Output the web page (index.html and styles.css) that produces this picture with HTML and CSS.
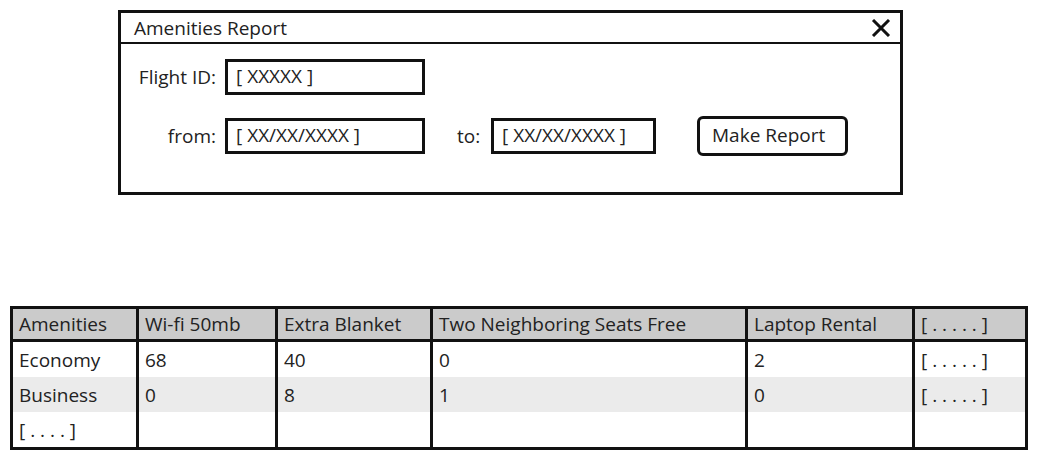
FILE: index.html
```html
<!DOCTYPE html>
<html lang="en">

<head>
    <meta charset="UTF-8">
    <meta name="viewport" content="width=device-width, initial-scale=1.0">
    <title>Amenities Report</title>
    <link rel="stylesheet" href="styles.css">
</head>

<body>
    <!-- 对话框 -->
    <div class="dialog">
        <div class="dialog-title">
            <span>Amenities Report</span>
            <svg class="close" width="20" height="18" viewBox="0 0 20 18">
                <path d="M2 1 L18 17 M18 1 L2 17" stroke="#111" stroke-width="3" fill="none" />
            </svg>
        </div>
        <div class="dialog-body">
            <div class="form-row">
                <label class="lbl">Flight ID:</label>
                <div class="field wide">[ XXXXX ]</div>
            </div>
            <div class="form-row second">
                <label class="lbl">from:</label>
                <div class="field wide">[ XX/XX/XXXX ]</div>
                <label class="lbl-to">to:</label>
                <div class="field narrow">[ XX/XX/XXXX ]</div>
                <button class="btn">Make Report</button>
            </div>
        </div>
    </div>

    <!-- 表格 -->
    <table class="report">
        <colgroup>
            <col style="width: 126px">
            <col style="width: 139px">
            <col style="width: 155px">
            <col style="width: 315px">
            <col style="width: 167px">
            <col style="width: 113px">
        </colgroup>
        <thead>
            <tr>
                <th>Amenities</th>
                <th>Wi-fi 50mb</th>
                <th>Extra Blanket</th>
                <th>Two Neighboring Seats Free</th>
                <th>Laptop Rental</th>
                <th class="dots">[ . . . . . ]</th>
            </tr>
        </thead>
        <tbody>
            <tr>
                <td>Economy</td>
                <td>68</td>
                <td>40</td>
                <td>0</td>
                <td>2</td>
                <td class="dots">[ . . . . . ]</td>
            </tr>
            <tr class="alt">
                <td>Business</td>
                <td>0</td>
                <td>8</td>
                <td>1</td>
                <td>0</td>
                <td class="dots">[ . . . . . ]</td>
            </tr>
            <tr>
                <td class="dots">[ . . . . ]</td>
                <td></td>
                <td></td>
                <td></td>
                <td></td>
                <td></td>
            </tr>
        </tbody>
    </table>
</body>

</html>
```

FILE: styles.css
```css
body {
    margin: 0;
    background-color: #fff;
    color: #222;
    font-family: "Open Sans", "Noto Sans", sans-serif;
    font-size: 19px;
}

.dialog {
    margin: 10px 0 0 118px;
    width: 779px;
    height: 179px;
    border: 3px solid #111;
}

.dialog-title {
    display: flex;
    align-items: center;
    justify-content: space-between;
    height: 29px;
    padding: 0 9px 0 13px;
    border-bottom: 2px solid #111;
}

.close {
    display: block;
}

.dialog-body {
    padding-top: 15px;
}

.form-row {
    display: flex;
    align-items: center;
}

.form-row.second {
    margin-top: 21px;
}

.lbl {
    width: 104px;
    padding-right: 9px;
    text-align: right;
    box-sizing: border-box;
}

.field {
    height: 36px;
    box-sizing: border-box;
    border: 3px solid #111;
    padding-left: 8px;
    line-height: 29px;
    white-space: nowrap;
}

.field.wide {
    width: 200px;
}

.field.narrow {
    width: 165px;
}

.lbl-to {
    margin-left: 32px;
    width: 34px;
}

.btn {
    margin-left: 41px;
    width: 151px;
    height: 40px;
    background: #fff;
    border: 3px solid #111;
    border-radius: 6px;
    font-family: inherit;
    font-size: 19px;
    color: #222;
    text-align: left;
    padding: 0 0 2px 12px;
    white-space: nowrap;
}

.report {
    margin: 111px 0 0 10px;
    width: 1015px;
    border-collapse: collapse;
    table-layout: fixed;
    border: 3px solid #111;
}

.report th,
.report td {
    border-left: 3px solid #111;
    border-right: 3px solid #111;
    padding: 0 6px;
    text-align: left;
    font-weight: normal;
    white-space: nowrap;
    overflow: hidden;
}

.report th {
    height: 30px;
    background-color: #cbcbcb;
    border-bottom: 3px solid #111;
}

.report td {
    height: 35px;
}

.report tr.alt td {
    background-color: #ebebeb;
}
```
